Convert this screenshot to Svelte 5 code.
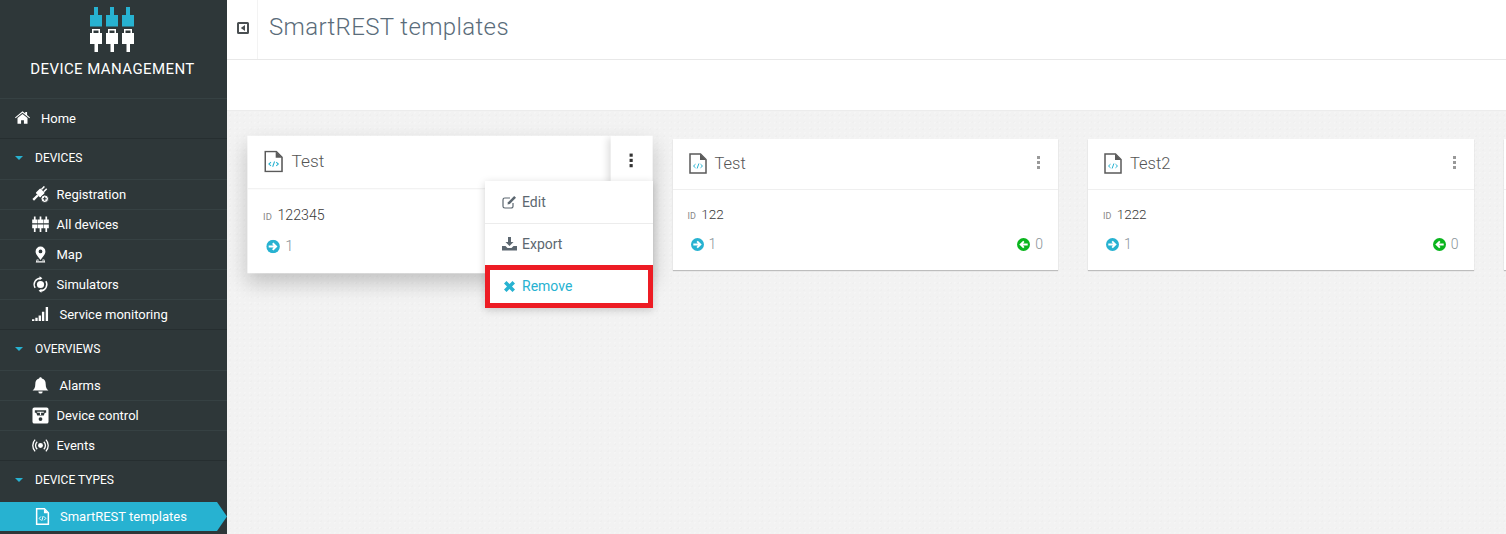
<script lang="ts">
	// SmartREST templates page of the device management app

	type NavItem = { label: string; icon: string; wide?: boolean; active?: boolean };
	type NavGroup = { title: string; items: NavItem[] };

	const groups: NavGroup[] = [
		{
			title: 'Devices',
			items: [
				{ label: 'Registration', icon: 'plug' },
				{ label: 'All devices', icon: 'devices' },
				{ label: 'Map', icon: 'pin' },
				{ label: 'Simulators', icon: 'sim' },
				{ label: 'Service monitoring', icon: 'signal', wide: true }
			]
		},
		{
			title: 'Overviews',
			items: [
				{ label: 'Alarms', icon: 'bell', wide: true },
				{ label: 'Device control', icon: 'control' },
				{ label: 'Events', icon: 'radio' }
			]
		},
		{
			title: 'Device types',
			items: [{ label: 'SmartREST templates', icon: 'file', wide: true, active: true }]
		}
	];

	const templates = [
		{ name: 'Test', id: '122345', out: 1, back: 0, open: true },
		{ name: 'Test', id: '122', out: 1, back: 0, open: false },
		{ name: 'Test2', id: '1222', out: 1, back: 0, open: false }
	];
</script>

{#snippet navIcon(name: string)}
	<svg class="nav-icon" viewBox="0 0 18 18" fill="currentColor" aria-hidden="true">
		{#if name === 'plug'}
			<g transform="rotate(45 8 8)">
				<rect x="4.500" y="3.500" width="7" height="7" rx="1" />
				<rect x="5.500" y="-1" width="1.600" height="4.500" />
				<rect x="8.900" y="-1" width="1.600" height="4.500" />
				<rect x="6.800" y="10.500" width="2.400" height="7" />
			</g>
			<circle cx="13.500" cy="13.500" r="4" stroke="#2e3739" stroke-width="1" />
			<path d="M12.900 11.500h1.200v1.400h1.400v1.200h-1.400v1.400h-1.200v-1.400h-1.400v-1.200h1.400z" fill="#2e3739" />
		{:else if name === 'devices'}
			<path d="M2 .5h1.800v3.200h1.900v4.100H.2V3.700H2zM8.100 .5h1.800v3.200h1.900v4.100H6.200V3.700h1.900zM14.200 .5H16v3.200h1.800v4.100h-5.500V3.700h1.900zM.2 9h5.500v3.900H3.800v4.100H2v-4.100H.2zM6.200 9h5.600v3.900H9.900v4.100H8.100v-4.100H6.200zM12.300 9h5.500v3.900H16v4.100h-1.800v-4.100h-1.900z" />
		{:else if name === 'pin'}
			<path fill-rule="evenodd" d="M9 .5a5.200 5.200 0 0 1 5.200 5.200c0 3-3 6.200-5.200 9-2.200-2.800-5.200-6-5.200-9A5.200 5.200 0 0 1 9 .5zm0 3.300a2 2 0 1 0 0 4 2 2 0 0 0 0-4z" />
			<path d="M5 14.300h1.700l.8 1H5.400l-.2.8h7.600l-.2-.8h-2.100l.8-1H13l1 3.200H4z" />
		{:else if name === 'sim'}
			<circle cx="9" cy="9" r="3.800" />
			<path fill="none" stroke="currentColor" stroke-width="1.500" d="M3.300 12.500A6.700 6.700 0 0 1 9 2.300M14.700 5.500A6.700 6.700 0 0 1 9 15.700" />
			<path d="M8 .2l3 2.200-3 2zM10 13.600l-3 2 3 2.200z" />
		{:else if name === 'signal'}
			<path d="M0 14h2.500v2H0zM3.500 12.500H6V16H3.500zM7 10h2.500v6H7zM10.500 6H13v10h-2.500zM14.500 1H17v15h-2.500z" />
		{:else if name === 'bell'}
			<path d="M9 .2c.9 0 1.500.7 1.500 1.500 2.900.7 4 2.900 4 5.600 0 4 1.300 5.500 2.900 7.100H.6c1.600-1.600 2.900-3.100 2.900-7.100 0-2.700 1.100-4.900 4-5.600C7.500.9 8.100.2 9 .2zM6.700 15.300h4.600a2.300 2.300 0 0 1-4.600 0z" />
		{:else if name === 'control'}
			<path fill-rule="evenodd" d="M2.500.5h13a2 2 0 0 1 2 2v13a2 2 0 0 1-2 2h-13a2 2 0 0 1-2-2v-13a2 2 0 0 1 2-2zM3 3.500V6h1.500l1 3h7l1-3H15V3.500z" />
			<path d="M5.500 5h7v1H9.600v2.500H8.400V6H5.500z" />
			<circle cx="9" cy="12.800" r="2" fill="#2e3739" />
		{:else if name === 'radio'}
			<circle cx="9" cy="9" r="2.600" />
			<path fill="none" stroke="currentColor" stroke-width="1.400" d="M5.500 5a5.500 5.500 0 0 0 0 8M12.500 5a5.500 5.500 0 0 1 0 8M3.300 2.800a9 9 0 0 0 0 12.400M14.700 2.800a9 9 0 0 1 0 12.400" />
		{:else if name === 'file'}
			<path fill="none" stroke="currentColor" stroke-width="1.600" d="M2.800.8h8.200l4.200 4.200v12.200H2.800z" />
			<path d="M10.500 1l4.500 4.500h-4.500z" />
			<path fill="none" stroke="currentColor" stroke-width="1" d="M7.300 9l-1.800 2 1.800 2M10.700 9l1.800 2-1.800 2M9.700 8.500l-1.400 5" />
		{/if}
	</svg>
{/snippet}

{#snippet fileIcon()}
	<svg class="file-icon" width="18" height="21" viewBox="0 0 18 21" aria-hidden="true">
		<path fill="#fff" stroke="#5a5a5a" stroke-width="1.500" d="M1 1h10.500L17 6.500V20H1z" />
		<path fill="#5a5a5a" d="M11 1l6 6h-6z" />
		<path fill="none" stroke="#27b2d1" stroke-width="1" d="M6.500 11.200L4.500 13l2 1.800M11.500 11.200l2 1.800-2 1.800M9.900 10.500L8.100 15.500" />
	</svg>
{/snippet}

{#snippet arrow(color: string, back: boolean)}
	<svg width="13" height="13" viewBox="0 0 13 13" aria-hidden="true">
		<circle cx="6.500" cy="6.500" r="6.500" fill={color} />
		<path fill="#fff" d={back
			? 'M2.300 6.500L6.200 2.700l1.300 1.300-1.500 1.500h4.700v2H6l1.500 1.500-1.300 1.300z'
			: 'M10.700 6.500L6.800 2.700 5.500 4 7 5.500H2.300v2H7L5.500 9l1.300 1.300z'} />
	</svg>
{/snippet}

<div class="app">
	<aside class="sidebar">
		<div class="brand">
			<svg class="logo" width="44" height="45" viewBox="0 0 44 45" aria-hidden="true">
				{#each [0, 16, 32] as x}
					<path fill="#27b2d1" d="M{x + 4} 0h4v8h4v11.500H{x}V8h{4}z" />
					<path fill="#fff" fill-rule="evenodd" d="M{x + 2} 22h8v4h2v11H{x + 8}v8h-3.500v-8H{x}V26h2zm1.500 1.500V26h5v-2.500z" />
				{/each}
			</svg>
			<div class="brand-name">DEVICE MANAGEMENT</div>
		</div>

		<a class="home" href="#home">
			<svg class="home-icon" viewBox="0 0 18 15" fill="currentColor" aria-hidden="true">
				<path d="M9 0l3.300 2.700V1h2.200v3.500L18 7.400l-.8 1L9 1.800.8 8.400 0 7.400z" />
				<path d="M9 3.200l6 4.900V15h-4.300v-4.300H7.300V15H3V8.100z" />
			</svg>
			Home
		</a>

		{#each groups as group}
			<section class="group">
				<h2 class="group-title"><span class="caret"></span>{group.title}</h2>
				{#each group.items as item}
					<a class="item" class:wide={item.wide} class:active={item.active} href="#item">
						{@render navIcon(item.icon)}
						<span>{item.label}</span>
					</a>
				{/each}
			</section>
		{/each}
	</aside>

	<main class="main">
		<header class="topbar">
			<button class="toggle" aria-label="Collapse menu">
				<svg width="12" height="12" viewBox="0 0 12 12" aria-hidden="true">
					<path fill="#4a4f52" fill-rule="evenodd" d="M1.500 0h9A1.500 1.500 0 0 1 12 1.500v9a1.500 1.500 0 0 1-1.500 1.500h-9A1.500 1.500 0 0 1 0 10.500v-9A1.500 1.500 0 0 1 1.500 0zM2 2v8h8V2z" />
					<path fill="#4a4f52" d="M8 3v6L3.800 6z" />
				</svg>
			</button>
			<h1>SmartREST templates</h1>
		</header>
		<div class="subbar"></div>

		<div class="grid">
			{#each templates as t}
				<div class="slot">
					<article class="card" class:raised={t.open}>
						<div class="card-head">
							{@render fileIcon()}
							<span class="card-name">{t.name}</span>
							<span class="dots" class:dark={t.open}><i></i><i></i><i></i></span>
						</div>
						<div class="card-body">
							<div class="card-id"><small>ID</small> {t.id}</div>
							<div class="card-stats">
								<span class="stat">{@render arrow('#27b2d1', false)} {t.out}</span>
								{#if !t.open}
									<span class="stat">{@render arrow('#0ab51e', true)} {t.back}</span>
								{/if}
							</div>
						</div>
					</article>

					{#if t.open}
						<ul class="menu">
							<li>
								<svg viewBox="0 0 15 14" width="15" height="14" aria-hidden="true">
									<path fill="none" stroke="#5c6770" stroke-width="1.200" d="M11 8v3.200a1.800 1.800 0 0 1-1.800 1.800H2.800A1.800 1.800 0 0 1 1 11.200V4.800A1.800 1.800 0 0 1 2.800 3H8" />
									<path fill="#5c6770" d="M12.200 1L14 2.800 7.800 9 5.500 9.500 6 7.200z" />
								</svg>
								Edit
							</li>
							<li>
								<svg viewBox="0 0 15 14" width="15" height="14" aria-hidden="true">
									<path fill="#5c6770" d="M6 0h3v5h2.500l-4 4-4-4H6zM0 9h3.500l2 2h4l2-2H15v4.500H0z" />
								</svg>
								Export
							</li>
							<li class="remove">
								<svg viewBox="0 0 11 11" width="11" height="11" aria-hidden="true">
									<path fill="#27b2d1" d="M2.500 0l3 3 3-3L11 2.500l-3 3 3 3L8.500 11l-3-3-3 3L0 8.500l3-3-3-3z" />
								</svg>
								Remove
							</li>
						</ul>
					{/if}
				</div>
			{/each}
			<div class="slot"><article class="card"><div class="card-head"></div></article></div>
		</div>
	</main>
</div>

<style>
	:global(body) {
		margin: 0;
		background: #f2f2f2;
		overflow: hidden;
	}

	.app {
		display: flex;
		width: 1506px;
		height: 534px;
		overflow: hidden;
		font-family: Roboto, 'Liberation Sans', sans-serif;
	}

	/* sidebar */
	.sidebar {
		flex: 0 0 227px;
		background: #2e3739;
		color: #fff;
	}

	.brand {
		height: 99px;
		box-sizing: border-box;
		padding-top: 7px;
		border-bottom: 1px solid #364143;
		text-align: center;
	}

	.logo {
		display: block;
		margin-left: 90px;
	}

	.brand-name {
		margin-top: 8px;
		padding-right: 2px;
		font-size: 15px;
		line-height: 18px;
		letter-spacing: 0.42px;
	}

	.home {
		display: flex;
		align-items: center;
		height: 39px;
		padding-left: 15px;
		border-bottom: 1px solid #262e30;
		color: #fff;
		font-size: 13px;
		text-decoration: none;
	}

	.home-icon {
		width: 15px;
		height: 13px;
		margin: -3px 11px 0 0;
	}

	.group {
		border-bottom: 1px solid #262e30;
	}

	.group:last-child {
		border-bottom: 0;
	}

	.group-title {
		display: flex;
		align-items: center;
		box-sizing: border-box;
		height: 40px;
		margin: 0;
		padding: 0 0 2px 15px;
		font-size: 12px;
		font-weight: 400;
		text-transform: uppercase;
	}

	.caret {
		width: 0;
		height: 0;
		margin-right: 12px;
		border: 4px solid transparent;
		border-top: 4px solid #27b2d1;
		border-bottom: 0;
	}

	.item {
		display: flex;
		align-items: center;
		height: 29px;
		padding-left: 31.500px;
		border-top: 1px solid #364143;
		color: #fff;
		font-size: 13px;
		text-decoration: none;
	}

	.nav-icon {
		flex: none;
		width: 17px;
		height: 17px;
		margin: -1px 8px 0 0;
	}

	.item.wide .nav-icon {
		margin-right: 11px;
	}

	.item.active {
		width: 227px;
		box-sizing: border-box;
		margin-top: 1px;
		padding-left: 34px;
		border-top: 0;
		background: #27b2d1;
		clip-path: polygon(0 0, 217px 0, 100% 50%, 217px 100%, 0 100%);
	}

	.item.active .nav-icon {
		margin-right: 9px;
	}

	/* main column */
	.main {
		flex: 1;
		min-width: 0;
		background-color: #f2f2f2;
		background-image: radial-gradient(rgba(255, 255, 255, 0.22) 1px, transparent 1px),
			radial-gradient(rgba(0, 0, 0, 0.01) 1px, transparent 1px);
		background-size: 5px 5px, 7px 7px;
	}

	.topbar {
		display: flex;
		align-items: stretch;
		height: 59px;
		border-bottom: 1px solid #e8e8e8;
		background: #fff;
	}

	.toggle {
		width: 31px;
		padding: 0 0 0 1px;
		border: 0;
		border-right: 1px solid #f3f3f3;
		background: none;
	}

	.topbar h1 {
		margin: 0 0 6px 11px;
		align-self: center;
		color: #5a6c7a;
		font-size: 24px;
		font-weight: 300;
		letter-spacing: 0.37px;
	}

	.subbar {
		height: 50px;
		background: #fff;
		box-shadow: 0 1px 0 #ececec;
	}

	.grid {
		display: grid;
		grid-template-columns: repeat(4, 385.5px);
		gap: 30px;
		padding: 29px 0 0 30px;
	}

	.slot {
		position: relative;
		height: 131px;
	}

	.card {
		height: 131px;
		box-sizing: border-box;
		background: #fff;
		box-shadow: 0 1px 1px rgba(0, 0, 0, 0.22);
	}

	.card.raised {
		transform: scale(1.05);
		box-shadow: 0 9px 18px rgba(0, 0, 0, 0.2);
	}

	.card-head {
		position: relative;
		display: flex;
		align-items: center;
		box-sizing: border-box;
		height: 51px;
		padding: 0 16px 2px;
		border-bottom: 1px solid #efefef;
	}

	.file-icon {
		margin-right: 8px;
	}

	.card-name {
		flex: 1;
		color: #555;
		font-size: 16.500px;
		font-weight: 300;
	}

	.dots {
		display: flex;
		flex-direction: column;
		gap: 2px;
		margin: 0 2px 2px 0;
	}

	.dots i {
		width: 3px;
		height: 3px;
		background: #999;
	}

	/* the hovered card keeps its toggle in a cell of its own */
	.dots.dark {
		position: absolute;
		top: 0;
		right: 0;
		bottom: 0;
		justify-content: center;
		align-items: center;
		width: 40px;
		margin: 0;
		padding-bottom: 4px;
		box-sizing: border-box;
		background: #fff;
		box-shadow: -5px 0 7px -2px rgba(0, 0, 0, 0.14);
		clip-path: inset(0 0 0 -14px);
	}

	.dots.dark i {
		background: #333;
	}

	.card-body {
		padding: 14.500px 15px 0;
	}

	.card-id {
		color: #3a3a3a;
		font-size: 13.500px;
		font-weight: 300;
		line-height: 18px;
	}

	.card-id small {
		margin-right: 2px;
		color: #888;
		font-size: 9px;
		font-weight: 400;
	}

	.card-stats {
		display: flex;
		justify-content: space-between;
		margin-top: 11.500px;
		padding: 0 0 0 3px;
	}

	.stat {
		display: flex;
		align-items: center;
		gap: 5px;
		color: #8a9499;
		font-size: 14px;
		font-weight: 300;
	}

	/* dropdown of the hovered card */
	.menu {
		position: absolute;
		top: 42px;
		right: -10.500px;
		width: 168px;
		margin: 0;
		padding: 0;
		list-style: none;
		background: #fff;
		box-shadow: 0 2px 8px rgba(0, 0, 0, 0.18);
		color: #5c6770;
		font-size: 14px;
	}

	.menu li {
		display: flex;
		align-items: center;
		gap: 5px;
		box-sizing: border-box;
		height: 42px;
		padding: 0 0 2px 17px;
		border-bottom: 1px solid #ececec;
	}

	.menu li:first-child {
		height: 43px;
		padding-bottom: 1px;
	}

	.menu li.remove {
		height: 43px;
		margin-top: -1px;
		padding: 0 0 1px 14px;
		gap: 7px;
		border: 5px solid #ed1c24;
		color: #27b2d1;
	}
</style>
